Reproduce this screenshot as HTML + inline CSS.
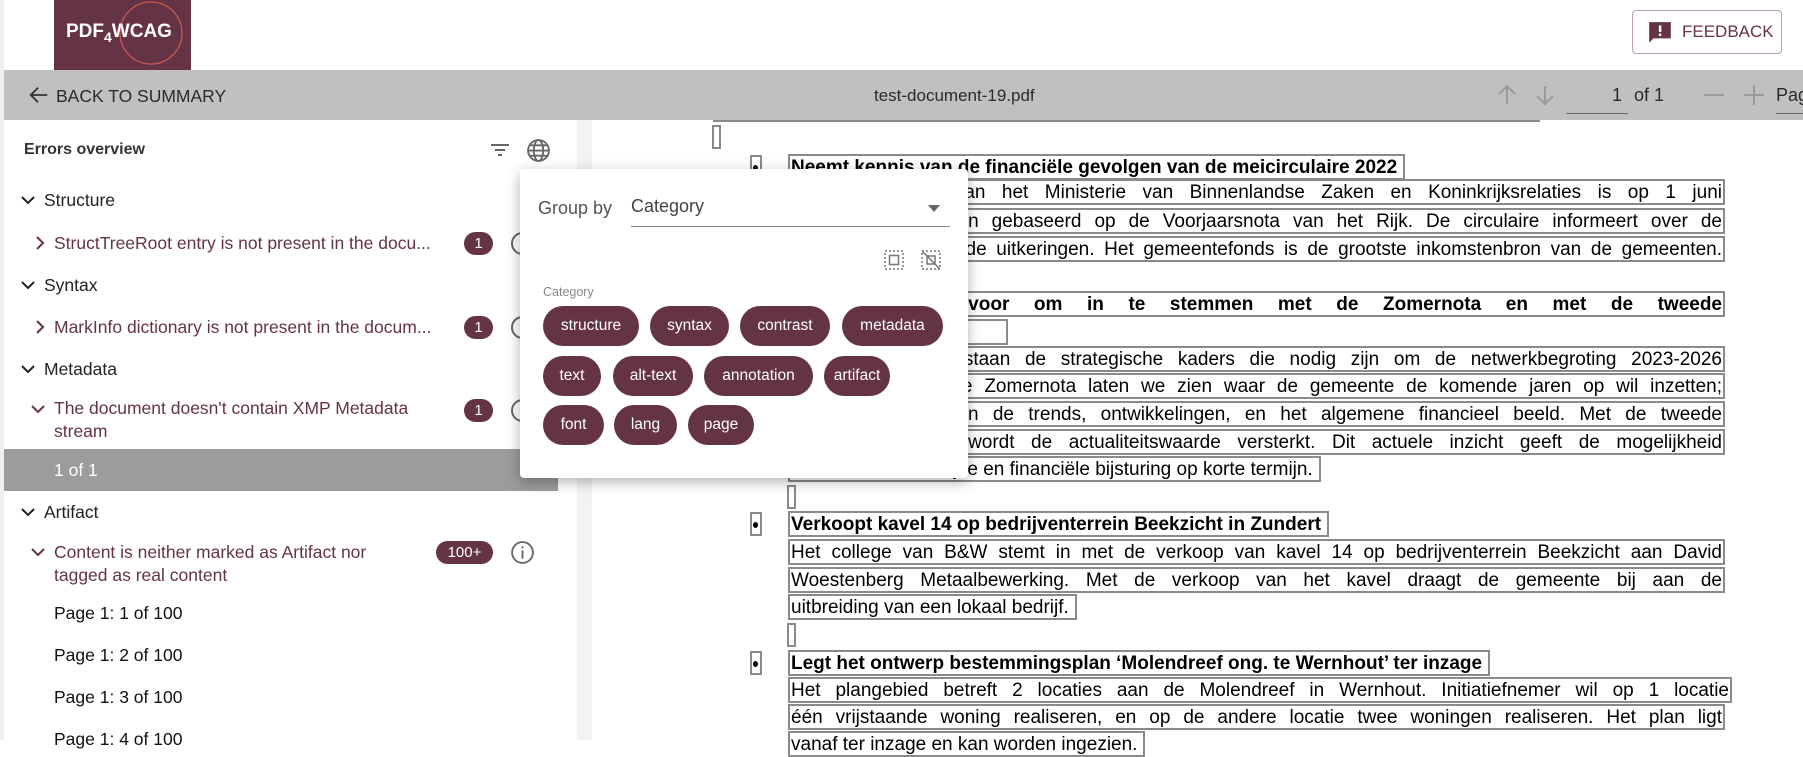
<!DOCTYPE html>
<html><head><meta charset="utf-8"><style>
*{box-sizing:border-box;margin:0;padding:0}
body{width:1803px;height:740px;overflow:hidden;background:#fff;font-family:"Liberation Sans",sans-serif;position:relative}
.abs{position:absolute}
.logo{left:54px;top:0;width:137px;height:70px;background:#653346;overflow:hidden}
.fb{left:1632px;top:10px;width:150px;height:44px;border:1px solid #bfa3ad;border-radius:4px;color:#653346;font-size:17px}
.tb{left:4px;top:70px;width:1799px;height:50px;background:#c0c0c0;color:#2a2a2a;font-size:17px}
.side{left:4px;top:120px;width:573px;height:620px;background:#fff}
.strip{left:577px;top:120px;width:15px;height:620px;background:#f3f3f3}
.lb{left:0;top:0;width:4px;height:740px;background:#f0f0f0}
.hd{font-size:17.5px;color:#222}
.it{font-size:17.5px;color:#653346;line-height:23px}
.pg{font-size:17.5px;color:#111}
.badge{background:#653346;color:#fff;font-size:15px;border-radius:12px;height:23px;line-height:23px;text-align:center}
.info{width:23px;height:23px;border:2px solid #666;border-radius:50%}
.pop{left:520px;top:169px;width:448px;height:309px;background:#fff;border-radius:4px;box-shadow:0 4px 14px rgba(0,0,0,.3)}
.chip{position:absolute;height:40px;line-height:40px;background:#653346;color:#fff;border-radius:20px;font-size:15.5px;text-align:center}
.ln{position:absolute;left:788px;width:937px;height:26px;line-height:23px;font-size:19px;color:#000;border:2px solid #8a8a8a;text-align:justify;text-align-last:justify;overflow:hidden;padding:0 1px}
.ln.b{font-weight:bold}
.ln.l{text-align:left;text-align-last:left;white-space:nowrap;width:max-content;padding-right:6px}
.sm{position:absolute;width:9px;height:24px;border:2px solid #8a8a8a}
.bul{position:absolute;left:750px;width:12px;height:24px;border:2px solid #8a8a8a}
.bul:after{content:"";position:absolute;left:1px;top:8px;width:5px;height:6px;background:#000;border-radius:50%}
</style></head><body>
<div class="abs lb"></div>
<div class="abs logo">
<svg width="137" height="70" style="position:absolute;left:0;top:0"><circle cx="97" cy="33" r="31" fill="none" stroke="#c65a4e" stroke-width="1.3"/></svg>
<div class="abs" style="left:12px;top:21px;color:#fff;font-weight:bold;font-size:19px;letter-spacing:0">PDF<sub style="font-size:14px;vertical-align:-5px">4</sub>WCAG</div>
</div>
<div class="abs fb"><svg class="abs" style="left:14px;top:9px" width="26" height="26" viewBox="0 0 24 24"><path d="M2 2h20v15H6l-4 4z" fill="#653346"/><rect x="11" y="5" width="2.2" height="6" fill="#fff"/><rect x="11" y="12.5" width="2.2" height="2.2" fill="#fff"/></svg><span class="abs" style="left:49px;top:11px">FEEDBACK</span></div>

<div class="abs tb">
<svg class="abs" style="left:24px;top:14px" width="22" height="22" viewBox="0 0 24 24"><path d="M21 12H4M11 4l-8 8 8 8" fill="none" stroke="#333" stroke-width="2"/></svg>
<span class="abs" style="left:52px;top:16px;font-size:17.5px">BACK TO SUMMARY</span>
<span class="abs" style="left:870px;top:16px">test-document-19.pdf</span>
<svg class="abs" style="left:1491px;top:13px" width="24" height="24" viewBox="0 0 24 24"><path d="M12 21V4M4 11l8-8 8 8" fill="none" stroke="#9a9a9a" stroke-width="2"/></svg>
<svg class="abs" style="left:1529px;top:13px" width="24" height="24" viewBox="0 0 24 24"><path d="M12 3v17M4 13l8 8 8-8" fill="none" stroke="#9a9a9a" stroke-width="2"/></svg>
<span class="abs" style="left:1608px;top:15px;font-size:18px">1</span>
<span class="abs" style="left:1630px;top:15px;font-size:18px">of 1</span>
<div class="abs" style="left:1562px;top:43px;width:62px;height:1px;background:#666"></div>
<div class="abs" style="left:1700px;top:24px;width:20px;height:2px;background:#9a9a9a"></div>
<div class="abs" style="left:1740px;top:24px;width:20px;height:2px;background:#9a9a9a"></div>
<div class="abs" style="left:1749px;top:15px;width:2px;height:20px;background:#9a9a9a"></div>
<span class="abs" style="left:1772px;top:15px;font-size:18px">Pag</span>
<div class="abs" style="left:1772px;top:43px;width:30px;height:1px;background:#666"></div>
</div>

<div class="abs side">
<div class="abs hd" style="left:20px;top:21px;font-size:16px;font-weight:bold;color:#333">Errors overview</div>
<svg class="abs" style="left:484px;top:18px" width="24" height="24" viewBox="0 0 24 24"><path d="M3 7h18M7 12h10M10 17h4" stroke="#666" stroke-width="2"/></svg>
<svg class="abs" style="left:522px;top:18px" width="25" height="25" viewBox="0 0 24 24" fill="none" stroke="#666" stroke-width="1.8"><circle cx="12" cy="12" r="10"/><ellipse cx="12" cy="12" rx="4.5" ry="10"/><path d="M2 12h20M4 7h16M4 17h16"/></svg>

<svg class="abs" style="left:16px;top:72px" width="16" height="16" viewBox="0 0 16 16"><path d="M2 5l6 6 6-6" fill="none" stroke="#222" stroke-width="2"/></svg>
<div class="abs hd" style="left:40px;top:70px">Structure</div>
<svg class="abs" style="left:30px;top:115px" width="12" height="16" viewBox="0 0 12 16"><path d="M3 2l6 6-6 6" fill="none" stroke="#653346" stroke-width="2"/></svg>
<div class="abs it" style="left:50px;top:112px">StructTreeRoot entry is not present in the docu...</div>
<div class="abs badge" style="left:460px;top:112px;width:29px">1</div>
<div class="abs info" style="left:507px;top:112px"></div>

<svg class="abs" style="left:16px;top:157px" width="16" height="16" viewBox="0 0 16 16"><path d="M2 5l6 6 6-6" fill="none" stroke="#222" stroke-width="2"/></svg>
<div class="abs hd" style="left:40px;top:155px">Syntax</div>
<svg class="abs" style="left:30px;top:199px" width="12" height="16" viewBox="0 0 12 16"><path d="M3 2l6 6-6 6" fill="none" stroke="#653346" stroke-width="2"/></svg>
<div class="abs it" style="left:50px;top:196px">MarkInfo dictionary is not present in the docum...</div>
<div class="abs badge" style="left:460px;top:196px;width:29px">1</div>
<div class="abs info" style="left:507px;top:196px"></div>

<svg class="abs" style="left:16px;top:241px" width="16" height="16" viewBox="0 0 16 16"><path d="M2 5l6 6 6-6" fill="none" stroke="#222" stroke-width="2"/></svg>
<div class="abs hd" style="left:40px;top:239px">Metadata</div>
<svg class="abs" style="left:26px;top:281px" width="16" height="16" viewBox="0 0 16 16"><path d="M2 5l6 6 6-6" fill="none" stroke="#653346" stroke-width="2"/></svg>
<div class="abs it" style="left:50px;top:277px;width:380px">The document doesn't contain XMP Metadata stream</div>
<div class="abs badge" style="left:460px;top:279px;width:29px">1</div>
<div class="abs info" style="left:507px;top:279px"></div>
<div class="abs" style="left:0;top:329px;width:554px;height:42px;background:#9c9c9c"></div>
<div class="abs" style="left:50px;top:340px;color:#fff;font-size:17.5px">1 of 1</div>

<svg class="abs" style="left:16px;top:384px" width="16" height="16" viewBox="0 0 16 16"><path d="M2 5l6 6 6-6" fill="none" stroke="#222" stroke-width="2"/></svg>
<div class="abs hd" style="left:40px;top:382px">Artifact</div>
<svg class="abs" style="left:26px;top:424px" width="16" height="16" viewBox="0 0 16 16"><path d="M2 5l6 6 6-6" fill="none" stroke="#653346" stroke-width="2"/></svg>
<div class="abs it" style="left:50px;top:421px;width:360px">Content is neither marked as Artifact nor tagged as real content</div>
<div class="abs badge" style="left:432px;top:421px;width:57px">100+</div>
<svg class="abs" style="left:506px;top:420px" width="25" height="25" viewBox="0 0 24 24" fill="none" stroke="#666" stroke-width="1.8"><circle cx="12" cy="12" r="10"/><path d="M12 10v8M12 6v2"/></svg>
<div class="abs pg" style="left:50px;top:483px">Page 1: 1 of 100</div>
<div class="abs pg" style="left:50px;top:525px">Page 1: 2 of 100</div>
<div class="abs pg" style="left:50px;top:567px">Page 1: 3 of 100</div>
<div class="abs pg" style="left:50px;top:609px">Page 1: 4 of 100</div>
</div>
<div class="abs strip"></div>

<!-- document -->
<div class="abs" style="left:713px;top:120px;width:827px;height:2px;background:#8a8a8a"></div>
<div class="sm" style="left:712px;top:125px"></div>
<div class="bul" style="top:155px"></div>
<div class="ln b l" style="top:154px">Neemt kennis van de financiële gevolgen van de meicirculaire 2022</div>
<div class="ln" style="top:179px">De meicirculaire van het Ministerie van Binnenlandse Zaken en Koninkrijksrelaties is op 1 juni</div>
<div class="ln" style="top:208px">2022 verschenen en gebaseerd op de Voorjaarsnota van het Rijk. De circulaire informeert over de</div>
<div class="ln" style="top:236px">ontwikkelingen van de uitkeringen. Het gemeentefonds is de grootste inkomstenbron van de gemeenten.</div>
<div class="ln b" style="top:291px">Stelt de raad voor om in te stemmen met de Zomernota en met de tweede</div>
<div class="ln b l" style="top:319px;width:220px">begrotingswijziging</div>
<div class="ln" style="top:346px">In de Zomernota staan de strategische kaders die nodig zijn om de netwerkbegroting 2023-2026</div>
<div class="ln" style="top:373px">op te stellen. In de Zomernota laten we zien waar de gemeente de komende jaren op wil inzetten;</div>
<div class="ln" style="top:401px">we geven inzicht in de trends, ontwikkelingen, en het algemene financieel beeld. Met de tweede</div>
<div class="ln" style="top:429px">begrotingswijziging wordt de actualiteitswaarde versterkt. Dit actuele inzicht geeft de mogelijkheid</div>
<div class="ln l" style="top:456px">tot beleidsinhoudelijke en financiële bijsturing op korte termijn.</div>
<div class="sm" style="left:787px;top:485px"></div>
<div class="bul" style="top:512px"></div>
<div class="ln b l" style="top:511px">Verkoopt kavel 14 op bedrijventerrein Beekzicht in Zundert</div>
<div class="ln" style="top:539px">Het college van B&amp;W stemt in met de verkoop van kavel 14 op bedrijventerrein Beekzicht aan David</div>
<div class="ln" style="top:567px">Woestenberg Metaalbewerking. Met de verkoop van het kavel draagt de gemeente bij aan de</div>
<div class="ln l" style="top:594px">uitbreiding van een lokaal bedrijf.</div>
<div class="sm" style="left:787px;top:623px"></div>
<div class="bul" style="top:651px"></div>
<div class="ln b l" style="top:650px">Legt het ontwerp bestemmingsplan ‘Molendreef ong. te Wernhout’ ter inzage</div>
<div class="ln" style="top:677px;width:944px">Het plangebied betreft 2 locaties aan de Molendreef in Wernhout. Initiatiefnemer wil op 1 locatie</div>
<div class="ln" style="top:704px">één vrijstaande woning realiseren, en op de andere locatie twee woningen realiseren. Het plan ligt</div>
<div class="ln l" style="top:731px">vanaf ter inzage en kan worden ingezien.</div>

<!-- popup -->
<div class="abs pop">
<div class="abs" style="left:18px;top:29px;font-size:18px;color:#555">Group by</div>
<div class="abs" style="left:111px;top:27px;font-size:18px;color:#444">Category</div>
<div class="abs" style="left:111px;top:57px;width:319px;height:1px;background:#888"></div>
<svg class="abs" style="left:408px;top:36px" width="12" height="8"><path d="M0 0h12L6 7z" fill="#666"/></svg>
<svg class="abs" style="left:363px;top:80px" width="22" height="22" viewBox="0 0 22 22" fill="none" stroke="#777" stroke-width="1.5"><rect x="2" y="2" width="18" height="18" stroke-dasharray="2 2"/><rect x="6.5" y="6.5" width="9" height="9"/></svg>
<svg class="abs" style="left:400px;top:80px" width="22" height="22" viewBox="0 0 22 22" fill="none" stroke="#777" stroke-width="1.5"><rect x="2" y="2" width="18" height="18" stroke-dasharray="2 2"/><path d="M2 2l18 18"/><rect x="7" y="7" width="8" height="8"/></svg>
<div class="abs" style="left:23px;top:116px;font-size:12.5px;color:#888">Category</div>
<div class="chip" style="left:23px;top:137px;width:96px">structure</div>
<div class="chip" style="left:130px;top:137px;width:79px">syntax</div>
<div class="chip" style="left:220px;top:137px;width:90px">contrast</div>
<div class="chip" style="left:322px;top:137px;width:101px">metadata</div>
<div class="chip" style="left:23px;top:187px;width:58px">text</div>
<div class="chip" style="left:93px;top:187px;width:80px">alt-text</div>
<div class="chip" style="left:184px;top:187px;width:109px">annotation</div>
<div class="chip" style="left:304px;top:187px;width:66px">artifact</div>
<div class="chip" style="left:23px;top:236px;width:61px">font</div>
<div class="chip" style="left:94px;top:236px;width:63px">lang</div>
<div class="chip" style="left:168px;top:236px;width:66px">page</div>
</div>
</body></html>
